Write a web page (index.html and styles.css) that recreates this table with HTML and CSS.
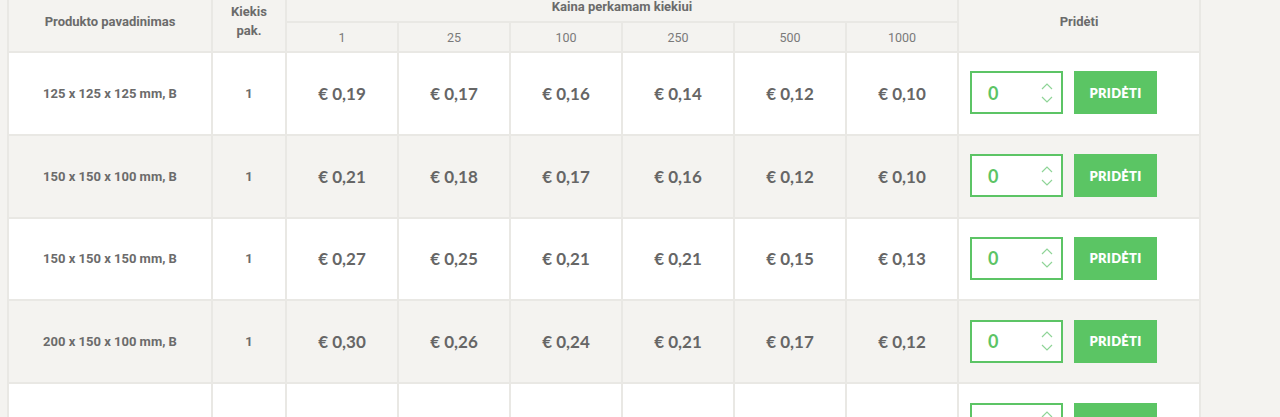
FILE: index.html
```html
<!DOCTYPE html>
<html lang="lt">
<head>
<meta charset="utf-8">
<title>Kainos</title>
<link rel="stylesheet" href="styles.css">
</head>
<body>
<div class="wrap">
<table class="prices">
  <colgroup>
    <col class="c-name"><col class="c-qty">
    <col class="c-p"><col class="c-p"><col class="c-p"><col class="c-p"><col class="c-p"><col class="c-p">
    <col class="c-add">
  </colgroup>
  <thead>
    <tr class="h1">
      <th rowspan="2">Produkto pavadinimas</th>
      <th rowspan="2" class="qty-h">Kiekis<br>pak.</th>
      <th colspan="6" class="kaina">Kaina perkamam kiekiui</th>
      <th rowspan="2" class="add-h">Pridėti</th>
    </tr>
    <tr class="h2">
      <th class="num">1</th><th class="num">25</th><th class="num">100</th><th class="num">250</th><th class="num">500</th><th class="num">1000</th>
    </tr>
  </thead>
  <tbody>
    <tr>
      <td class="name">125 x 125 x 125 mm, B</td><td class="qty">1</td>
      <td class="pr">€ 0,19</td><td class="pr">€ 0,17</td><td class="pr">€ 0,16</td><td class="pr">€ 0,14</td><td class="pr">€ 0,12</td><td class="pr">€ 0,10</td>
      <td class="add"><div class="ctl"><div class="inp"><span class="val">0</span><span class="spin"><svg width="12" height="7" viewBox="0 0 12 7"><path d="M1 6 L6 1 L11 6" fill="none" stroke="#8fd497" stroke-width="1.2"/></svg><svg width="12" height="7" viewBox="0 0 12 7"><path d="M1 1 L6 6 L11 1" fill="none" stroke="#8fd497" stroke-width="1.2"/></svg></span></div><button class="btn">PRIDĖTI</button></div></td>
    </tr>
    <tr>
      <td class="name">150 x 150 x 100 mm, B</td><td class="qty">1</td>
      <td class="pr">€ 0,21</td><td class="pr">€ 0,18</td><td class="pr">€ 0,17</td><td class="pr">€ 0,16</td><td class="pr">€ 0,12</td><td class="pr">€ 0,10</td>
      <td class="add"><div class="ctl"><div class="inp"><span class="val">0</span><span class="spin"><svg width="12" height="7" viewBox="0 0 12 7"><path d="M1 6 L6 1 L11 6" fill="none" stroke="#8fd497" stroke-width="1.2"/></svg><svg width="12" height="7" viewBox="0 0 12 7"><path d="M1 1 L6 6 L11 1" fill="none" stroke="#8fd497" stroke-width="1.2"/></svg></span></div><button class="btn">PRIDĖTI</button></div></td>
    </tr>
    <tr>
      <td class="name">150 x 150 x 150 mm, B</td><td class="qty">1</td>
      <td class="pr">€ 0,27</td><td class="pr">€ 0,25</td><td class="pr">€ 0,21</td><td class="pr">€ 0,21</td><td class="pr">€ 0,15</td><td class="pr">€ 0,13</td>
      <td class="add"><div class="ctl"><div class="inp"><span class="val">0</span><span class="spin"><svg width="12" height="7" viewBox="0 0 12 7"><path d="M1 6 L6 1 L11 6" fill="none" stroke="#8fd497" stroke-width="1.2"/></svg><svg width="12" height="7" viewBox="0 0 12 7"><path d="M1 1 L6 6 L11 1" fill="none" stroke="#8fd497" stroke-width="1.2"/></svg></span></div><button class="btn">PRIDĖTI</button></div></td>
    </tr>
    <tr>
      <td class="name">200 x 150 x 100 mm, B</td><td class="qty">1</td>
      <td class="pr">€ 0,30</td><td class="pr">€ 0,26</td><td class="pr">€ 0,24</td><td class="pr">€ 0,21</td><td class="pr">€ 0,17</td><td class="pr">€ 0,12</td>
      <td class="add"><div class="ctl"><div class="inp"><span class="val">0</span><span class="spin"><svg width="12" height="7" viewBox="0 0 12 7"><path d="M1 6 L6 1 L11 6" fill="none" stroke="#8fd497" stroke-width="1.2"/></svg><svg width="12" height="7" viewBox="0 0 12 7"><path d="M1 1 L6 6 L11 1" fill="none" stroke="#8fd497" stroke-width="1.2"/></svg></span></div><button class="btn">PRIDĖTI</button></div></td>
    </tr>
    <tr class="partial">
      <td></td><td></td><td></td><td></td><td></td><td></td><td></td><td></td>
      <td class="add"><div class="ctl"><div class="inp"><span class="spin"><svg width="12" height="7" viewBox="0 0 12 7"><path d="M1 6 L6 1 L11 6" fill="none" stroke="#8fd497" stroke-width="1.2"/></svg></span></div><div class="btn"></div></div></td>
    </tr>
  </tbody>
</table>
</div>
</body>
</html>
```

FILE: styles.css
```css
html, body {
  margin: 0;
  padding: 0;
  background: #f4f3f0;
  overflow: hidden;
}
.wrap {
  padding-left: 7px;
  margin-top: -11px;
}
.prices {
  border-collapse: collapse;
  table-layout: fixed;
  width: 1192px;
  font-family: Roboto, "Liberation Sans", sans-serif;
  color: #6b6b6b;
}
.c-name { width: 204px; }
.c-qty { width: 74px; }
.c-p { width: 112px; }
.c-add { width: 242px; }
.prices th, .prices td {
  border: 2px solid #e9e8e4;
  padding: 0;
  text-align: center;
  vertical-align: middle;
}
.prices th {
  background: #f4f3f0;
  font-size: 13px;
  font-weight: 700;
  color: #6b6b6b;
}
.h1 th { height: 30px; }
.h2 th { height: 28px; }
.kaina { vertical-align: bottom; padding-bottom: 2px; }
.qty-h { text-align: left; padding-left: 11px; line-height: 19px; }
.add-h { vertical-align: middle; }
.prices th.num {
  font-weight: 400;
  color: #7a7a7a;
  font-size: 12.5px;
}
.prices tbody tr { height: 82.75px; background: #fff; }
.prices tbody tr:nth-child(even) { background: #f4f3f0; }
.name { font-size: 13px; font-weight: 700; color: #6b6b6b; padding-bottom: 5px; }
.qty { font-size: 13px; font-weight: 700; color: #6b6b6b; padding-bottom: 5px; }
.pr {
  font-family: Lato, "Open Sans", sans-serif;
  font-weight: 700;
  font-size: 17px;
  color: #666;
  padding-bottom: 8px;
}
.add { text-align: left; }
.ctl {
  display: flex;
  align-items: center;
  gap: 11px;
  padding-left: 11px;
  padding-bottom: 1px;
}
.inp {
  width: 93px;
  height: 43px;
  box-sizing: border-box;
  border: 2px solid #5cc465;
  background: #fff;
  display: flex;
  align-items: center;
  justify-content: space-between;
  padding: 0 8px 0 16px;
}
.val {
  font-family: Lato, sans-serif;
  font-weight: 700;
  font-size: 18px;
  color: #5cc465;
}
.spin {
  display: flex;
  flex-direction: column;
  gap: 6px;
}
.spin svg { display: block; }
.btn {
  width: 83px;
  height: 43px;
  border: 0;
  background: #5bc564;
  color: #fff;
  font-family: Lato, sans-serif;
  font-weight: 800;
  font-size: 13px;
  letter-spacing: 0.3px;
  padding: 0;
}
.partial .ctl { align-items: flex-start; padding-bottom: 0; }
.partial .inp { justify-content: flex-end; align-items: flex-start; padding-top: 6px; }
.partial td { vertical-align: middle; }
```
